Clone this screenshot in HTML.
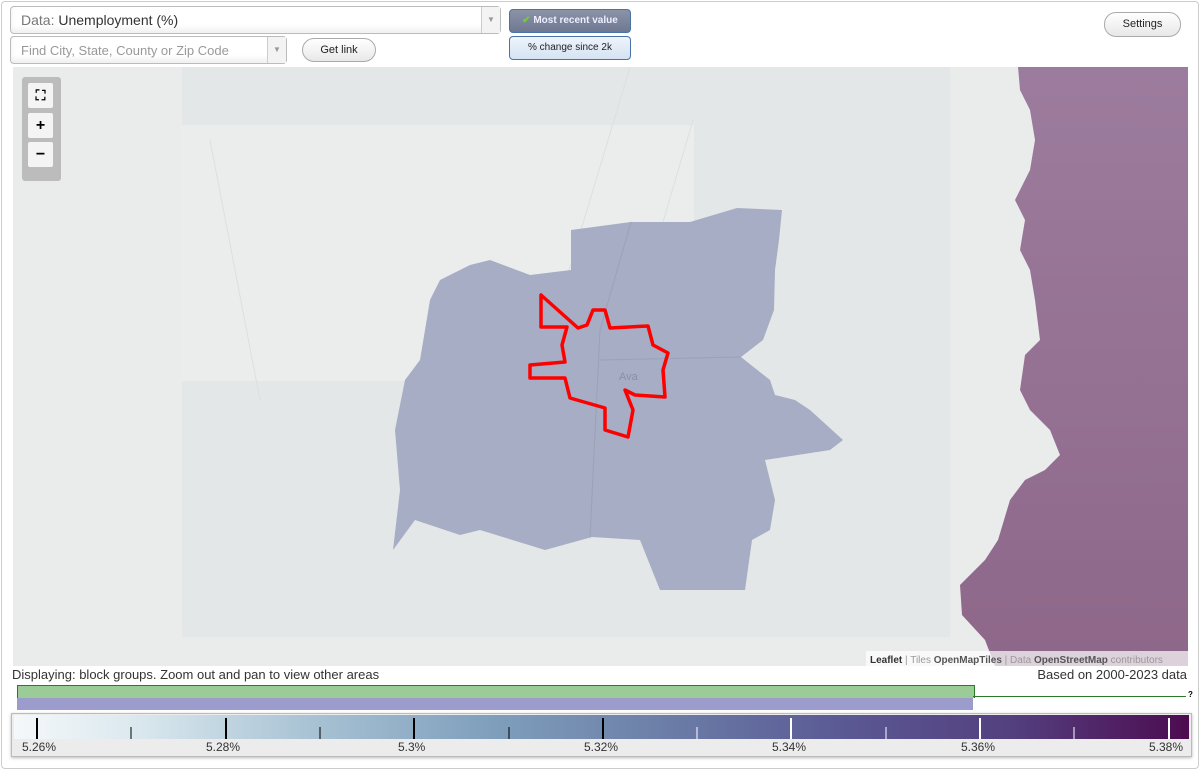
<!DOCTYPE html>
<html><head><meta charset="utf-8"><style>
body{margin:0;width:1200px;height:771px;background:#fff;font-family:"Liberation Sans",Arial,sans-serif;overflow:hidden;position:relative}
.frame{position:absolute;left:1px;top:1px;width:1196px;height:766px;border:1px solid #ccc;border-radius:4px}
.sel{position:absolute;border:1px solid #bbb;border-radius:4px;background:#fff;font-size:14px;color:#333;box-shadow:inset 0 -4px 6px #f0f0f0}
.arrow{position:absolute;right:0;top:0;bottom:0;width:18px;border-left:1px solid #ccc;background:#f3f3f3;color:#999;font-size:8px;text-align:center}
.btn{position:absolute;border:1px solid #aaa;border-radius:12px;background:linear-gradient(#fff,#e8e8e8);font-size:11px;text-align:center;color:#222}
.tog{position:absolute;border:1px solid #4a73a8;border-radius:4px;font-size:10px;text-align:center}
.ctl{position:absolute;left:22px;top:77px;width:39px;height:104px;background:#bcbcbc;border-radius:3px}
.ctl div{position:absolute;left:6px;width:25px;height:25px;background:#f4f4f4;border-radius:2px;text-align:center;font-weight:bold;font-size:16px;line-height:25px}
</style></head><body>
<div class="frame"></div>
<div class="sel" style="left:10px;top:6px;width:489px;height:26px"><span style="position:absolute;left:10px;top:5px"><span style="color:#777">Data:</span> Unemployment (%)</span><div class="arrow" style="line-height:26px">▼</div></div>
<div class="sel" style="left:10px;top:36px;width:275px;height:26px"><span style="position:absolute;left:10px;top:6px;color:#999;font-size:13px">Find City, State, County or Zip Code</span><div class="arrow" style="line-height:26px">▼</div></div>
<div class="btn" style="left:302px;top:38px;width:72px;height:22px;line-height:22px">Get link</div>
<div class="tog" style="left:509px;top:9px;width:120px;height:22px;line-height:21px;background:linear-gradient(#8a93a8,#6e7890);color:#eef;font-weight:bold"><span style="color:#7c3">✔</span> Most recent value</div>
<div class="tog" style="left:509px;top:36px;width:120px;height:22px;line-height:21px;background:linear-gradient(#eef4fb,#d5e3f3);color:#222">% change since 2k</div>
<div class="btn" style="left:1104px;top:12px;width:75px;height:23px;line-height:23px">Settings</div>
<svg style="position:absolute;left:13px;top:67px" width="1175" height="599" viewBox="13 67 1175 599">
<rect x="13" y="67" width="1175" height="599" fill="#eaecec"/>
<rect x="182" y="67" width="768" height="570" fill="#e4e7e7"/>
<rect x="182" y="125" width="512" height="256" fill="#ebeded"/>
<path d="M630 67 L560 300 L590 540 M210 140 L260 400 M693 120 L640 300" stroke="#dcdfe0" fill="none"/>
<defs><linearGradient id="pg" x1="0" y1="0" x2="0" y2="1"><stop offset="0" stop-color="#9c7c9e"/><stop offset="1" stop-color="#8e6789"/></linearGradient></defs>
<path fill="url(#pg)" d="M1018 67 L1188 67 L1188 666 L995 666 L985 640 L962 615 L960 585 L985 560 L998 540 L1010 500 L1025 480 L1045 470 L1060 455 L1050 430 L1030 410 L1020 390 L1025 355 L1040 340 L1035 300 L1030 270 L1020 250 L1025 220 L1015 200 L1030 170 L1035 140 L1030 110 L1020 90 Z"/>
<path fill="#a6adc4" d="M571 230 L631 222 L690 222 L737 208 L782 210 L779 240 L775 270 L774 310 L763 340 L741 357 L770 380 L775 395 L795 400 L810 410 L843 440 L830 450 L765 460 L775 500 L770 530 L752 540 L745 590 L660 590 L640 540 L592 537 L545 550 L480 530 L460 535 L415 520 L393 550 L400 490 L395 430 L405 380 L420 360 L430 300 L440 280 L470 265 L490 260 L530 275 L571 270 Z"/>
<path d="M631 222 L600 330 L590 537 M600 360 L740 357" stroke="#9aa1b8" fill="none"/>
<path fill="none" stroke="#f00" stroke-width="3.5" stroke-linejoin="round" d="M541 295 L541 327 L567 327 L562 345 L565 362 L530 365 L530 378 L565 378 L570 398 L605 408 L605 430 L628 437 L633 410 L625 390 L635 395 L665 397 L663 370 L668 353 L653 345 L648 326 L610 328 L605 310 L593 310 L587 325 L578 328 Z"/>
<text x="619" y="380" font-size="11" fill="#8a90a5" font-family="Liberation Sans">Ava</text>
<rect x="866" y="651" width="322" height="15" fill="rgba(255,255,255,0.7)"/>
<text x="870" y="663" font-size="10" fill="#999" font-family="Liberation Sans"><tspan fill="#333" font-weight="bold">Leaflet</tspan> | Tiles <tspan fill="#555" font-weight="bold">OpenMapTiles</tspan> | Data <tspan fill="#555" font-weight="bold">OpenStreetMap</tspan> contributors</text>
</svg>
<div class="ctl"><div style="top:6px;font-size:14px">⛶</div><div style="top:36px">+</div><div style="top:65px">−</div></div>
<div style="position:absolute;left:12px;top:667px;font-size:13px;color:#333">Displaying: block groups. Zoom out and pan to view other areas</div>
<div style="position:absolute;right:13px;top:667px;font-size:13px;color:#333">Based on 2000-2023 data</div>
<div style="position:absolute;left:17px;top:685px;width:956px;height:12px;background:#9bcb97;border:1px solid #2a7a2a;border-bottom:none"></div>
<div style="position:absolute;left:973px;top:696px;width:213px;height:1px;background:#2a7a2a"></div>
<div style="position:absolute;left:1188px;top:690px;font-size:8px;font-weight:bold">?</div>
<div style="position:absolute;left:17px;top:698px;width:956px;height:12px;background:#9b9bcc"></div>
<div style="position:absolute;left:11px;top:713px;width:1179px;height:42px;background:#ececec;border:1px solid #bbb;box-shadow:0 1px 3px #bbb"></div>
<div style="position:absolute;left:14px;top:715px;width:1175px;height:24px;background:linear-gradient(90deg,#f4f8fa,#dce9ef 10%,#a9c3d4 25%,#80a0bd 40%,#6c7fa8 55%,#5b5a95 70%,#533f7e 85%,#4d0b50)"></div>
<svg style="position:absolute;left:14px;top:715px" width="1175" height="24">
<g stroke-width="2"><line x1="23" y1="3" x2="23" y2="24" stroke="#000"/><line x1="212" y1="3" x2="212" y2="24" stroke="#000"/><line x1="400" y1="3" x2="400" y2="24" stroke="#000"/><line x1="589" y1="3" x2="589" y2="24" stroke="#000"/><line x1="777" y1="3" x2="777" y2="24" stroke="#fff"/><line x1="966" y1="3" x2="966" y2="24" stroke="#fff"/><line x1="1155" y1="3" x2="1155" y2="24" stroke="#fff"/></g>
<g stroke-width="1"><line x1="117" y1="12" x2="117" y2="24" stroke="#000"/><line x1="306" y1="12" x2="306" y2="24" stroke="#000"/><line x1="495" y1="12" x2="495" y2="24" stroke="#000"/><line x1="683" y1="12" x2="683" y2="24" stroke="#fff"/><line x1="872" y1="12" x2="872" y2="24" stroke="#fff"/><line x1="1060" y1="12" x2="1060" y2="24" stroke="#fff"/></g></svg>
<div style="position:absolute;top:740px;left:0;width:1200px;font-size:12px;color:#333">
<span style="position:absolute;left:22px">5.26%</span><span style="position:absolute;left:206px">5.28%</span><span style="position:absolute;left:398px">5.3%</span><span style="position:absolute;left:584px">5.32%</span><span style="position:absolute;left:772px">5.34%</span><span style="position:absolute;left:961px">5.36%</span><span style="position:absolute;left:1149px">5.38%</span></div>
</body></html>
